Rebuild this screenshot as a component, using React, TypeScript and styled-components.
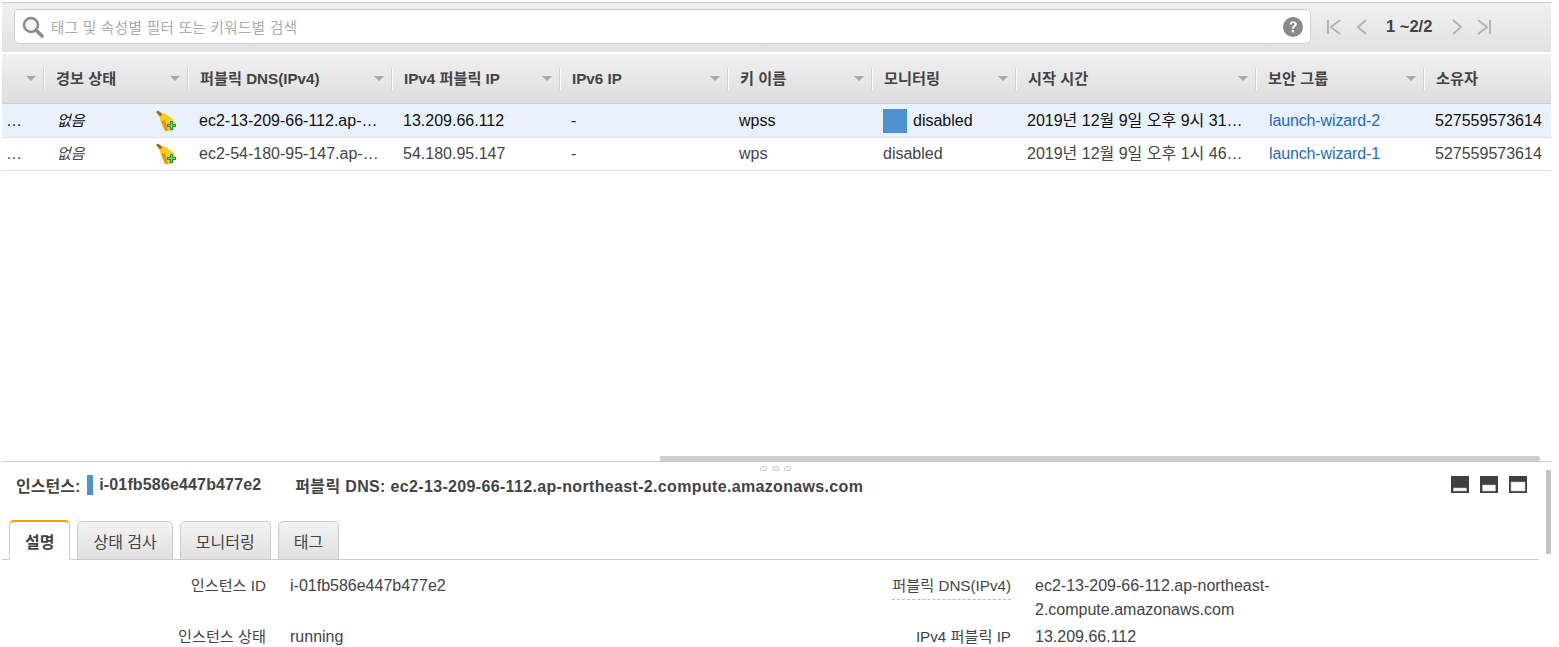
import React from "react";
import styled, { createGlobalStyle } from "styled-components";

const GlobalStyle = createGlobalStyle`
  html, body { margin: 0; padding: 0; background: #fff; }
  body {
    font-family: "Liberation Sans", "Noto Sans CJK KR", Arial, sans-serif;
    font-size: 16px;
    color: #444;
  }
`;

const COLUMNS = "41px 144px 204px 168px 168px 144px 144px 240px 168px 128px";

const Page = styled.div`
  width: 1549px;
  height: 647px;
  margin-left: 2px;
  overflow: hidden;
  display: flex;
  flex-direction: column;
`;

const Toolbar = styled.div`
  flex: none;
  height: 49px;
  margin-top: 2px;
  border-top: 1px solid #c8c8c8;
  border-bottom: 2px solid #fff;
  background: linear-gradient(#f0f0f0, #e2e2e2);
  display: flex;
  align-items: center;
  padding-left: 12px;
`;

const SearchBox = styled.div`
  width: 1297px;
  height: 35px;
  box-sizing: border-box;
  background: #fff;
  border: 1px solid #cfcfcf;
  border-radius: 5px;
  display: flex;
  align-items: center;
  padding: 0 7px 0 7px;
  gap: 7px;
  margin-top: -2px;
`;

const Placeholder = styled.span`
  flex: 1;
  color: #aaa;
  font-size: 14.5px;
  letter-spacing: 0.4px;
`;

const Pager = styled.div`
  display: flex;
  align-items: center;
  margin-left: 15px;
  margin-top: -2px;
`;

const PagerText = styled.span`
  font-weight: 700;
  font-size: 16.5px;
  color: #444;
  margin: 0 18px 0 15px;
`;

const PagerButton = styled.svg<{ $gap?: number }>`
  width: 16px;
  height: 18px;
  margin-right: ${(p) => p.$gap ?? 0}px;
  fill: none;
  stroke: #b4b4b4;
  stroke-width: 2;
`;

const TableArea = styled.div`
  position: relative;
  height: 407px;
  flex: none;
`;

const HeaderRow = styled.div`
  display: grid;
  grid-template-columns: ${COLUMNS};
  height: 49px;
  background: linear-gradient(#f0f0f0, #dedede);
  border-bottom: 1px solid #ccc;
`;

const HeaderCell = styled.div`
  display: flex;
  align-items: center;
  justify-content: space-between;
  padding-right: 7px;
`;

const HeaderLabel = styled.span`
  height: 22px;
  line-height: 22px;
  flex: 1;
  padding-left: 12px;
  border-left: 1px solid #d2d2d2;
  box-shadow: inset 1px 0 0 #fafafa;
  font-weight: 700;
  font-size: 15.2px;
  color: #444;
  white-space: nowrap;
`;

const FirstLabel = styled.span`
  flex: 1;
`;

const Caret = styled.i`
  width: 0;
  height: 0;
  border-left: 5px solid transparent;
  border-right: 5px solid transparent;
  border-top: 5px solid #a8a8a8;
`;

const Row = styled.div<{ $selected?: boolean }>`
  display: grid;
  grid-template-columns: ${COLUMNS};
  height: 32.6px;
  align-items: center;
  background: ${(p) => (p.$selected ? "#e9f1fc" : "#fff")};
  color: ${(p) => (p.$selected ? "#111" : "#444")};
  border-bottom: 1px solid #e0e0e0;
  white-space: nowrap;
`;

const Cell = styled.div<{ $pad?: number }>`
  padding-left: ${(p) => p.$pad ?? 12}px;
  padding-right: 12px;
  padding-top: 1px;
  overflow: hidden;
  display: flex;
  align-items: center;
  min-width: 0;
  line-height: 20px;
`;

const AlarmCell = styled(Cell)`
  justify-content: space-between;
  padding-right: 10px;
  overflow: visible;
`;

const Truncated = styled.span`
  overflow: hidden;
  text-overflow: ellipsis;
`;

const Italic = styled.em`
  font-style: italic;
  font-size: 15px;
`;

const Link = styled.a`
  color: #1e6bbf;
  text-decoration: none;
  letter-spacing: -0.13px;
`;

const MonitorSwatch = styled.span`
  width: 24px;
  height: 24px;
  background: #5091d0;
  margin-right: 6px;
  flex: none;
`;

const HScroll = styled.div`
  position: absolute;
  left: 658px;
  bottom: 0;
  width: 880px;
  height: 5px;
  background: #cfcfcf;
  border-radius: 0 2px 2px 0;
`;

const Details = styled.div`
  position: relative;
  border-top: 1px solid #ccc;
  flex: 1;
`;

const DragHandle = styled.div`
  position: absolute;
  top: 4px;
  left: 758px;
  display: flex;
  gap: 5px;
`;

const DragDot = styled.i`
  width: 5px;
  height: 3px;
  background: #f2f2f2;
  border: 1px solid #d0d0d0;
  border-radius: 2px 2px 0 0;
`;

const VScroll = styled.div`
  position: absolute;
  top: 8px;
  right: 0;
  width: 5px;
  height: 84px;
  background: #c4c4c4;
`;

const DetailsTitle = styled.div`
  height: 45px;
  display: flex;
  align-items: center;
  padding: 0 24px 0 14px;
  font-weight: 700;
  font-size: 16px;
  color: #444;
  white-space: nowrap;
`;

const IdMark = styled.span`
  width: 6px;
  height: 20px;
  background: #5091d0;
  margin: 0 6px 0 7px;
`;

const TitleDns = styled.span`
  margin-left: 34px;
  flex: 1;
  letter-spacing: 0.34px;
`;

const InstanceId = styled.span`
  letter-spacing: 0.15px;
`;

const WindowIcons = styled.div`
  display: flex;
  gap: 11px;
`;

const TabStrip = styled.div`
  height: 53px;
  margin-right: 12px;
  padding: 12px 0 0 7px;
  box-sizing: border-box;
  display: flex;
  align-items: flex-end;
  gap: 7px;
  border-bottom: 1px solid #ccc;
`;

const Tab = styled.div<{ $active?: boolean }>`
  height: ${(p) => (p.$active ? 40 : 39)}px;
  margin-bottom: -1px;
  padding: 0 15px;
  display: flex;
  align-items: center;
  box-sizing: border-box;
  border: 1px solid #ccc;
  border-top: ${(p) => (p.$active ? "2px solid #f90" : "1px solid #ccc")};
  border-bottom: ${(p) => (p.$active ? "1px solid #fff" : "1px solid #ccc")};
  border-radius: 5px 5px 0 0;
  background: ${(p) => (p.$active ? "#fff" : "linear-gradient(#f3f3f3, #e0e0e0)")};
  font-weight: ${(p) => (p.$active ? 700 : 400)};
  font-size: 16px;
  color: #444;
`;

const Fields = styled.div`
  display: grid;
  grid-template-columns: 264px 400px 297px 240px;
  column-gap: 24px;
  grid-auto-rows: minmax(51px, auto);
  padding-top: 14px;
  line-height: 24px;
`;

const FieldLabel = styled.div`
  text-align: right;
  font-size: 15.2px;
  color: #444;
`;

const Dashed = styled.span`
  display: inline-block;
  border-bottom: 1px dashed #bbb;
  padding-bottom: 1px;
`;

const FieldValue = styled.div`
  font-size: 16px;
  color: #444;
`;

const BroomIcon = () => (
  <svg width="22" height="22" viewBox="0 0 22 22">
    <path d="M1 2 L3 0.5 L9 5 L6 8 Z" fill="#a8691c" />
    <path d="M4.5 7 L9 3 L18 9 L20 14 L17 21 L10 21 L6 13 Z" fill="#f6cf1e" />
    <path d="M6.5 11 L10 21 L13 21 L10 10 Z" fill="#d89c14" />
    <path d="M15 11 h3 v3 h3 v3 h-3 v3 h-3 v-3 h-3 v-3 h3 Z" fill="#1c8f2a" />
    <path d="M16 12 h1 v3 h3 v1 h-3 v3 h-1 v-3 h-3 v-1 h3 Z" fill="#7fdc7a" />
  </svg>
);

const SearchIcon = () => (
  <svg width="22" height="22" viewBox="0 0 22 22" fill="none">
    <circle cx="9" cy="9" r="7" stroke="#8c8c8c" strokeWidth="2.6" fill="#f4f4f4" />
    <path d="M14.5 14.5 L20 20" stroke="#8c8c8c" strokeWidth="3.6" strokeLinecap="round" />
  </svg>
);

const HelpIcon = () => (
  <svg width="20" height="20" viewBox="0 0 20 20">
    <circle cx="10" cy="10" r="10" fill="#8a8a8a" />
    <path d="M6.6 7.6 C6.8 5.2 8.4 4.2 10.2 4.2 C12.4 4.2 13.7 5.6 13.7 7.2 C13.7 9.6 11 9.6 11 11.8 L8.9 11.8 C8.9 8.8 11.4 8.8 11.4 7.3 C11.4 6.6 10.9 6.1 10.1 6.1 C9.3 6.1 8.9 6.7 8.8 7.6 Z" fill="#fff" />
    <rect x="8.8" y="13" width="2.3" height="2.4" fill="#fff" />
  </svg>
);

const WindowIcon = ({ inner }: { inner: number }) => (
  <svg width="18" height="17" viewBox="0 0 18 17">
    <rect width="18" height="17" fill="#3f3f3f" />
    <rect x={inner > 6 ? 2 : 2.5} y={15 - inner} width={inner > 6 ? 14 : 13} height={inner} fill="#fff" stroke="#bbb" strokeWidth="0.6" />
  </svg>
);

const columns = ["", "경보 상태", "퍼블릭 DNS(IPv4)", "IPv4 퍼블릭 IP", "IPv6 IP", "키 이름", "모니터링", "시작 시간", "보안 그룹", "소유자"];

const rows = [
  { selected: true, dns: "ec2-13-209-66-112.ap-northeast-2.compute.amazonaws.com", ip: "13.209.66.112", key: "wpss", time: "2019년 12월 9일 오후 9시 31분 25초 UTC+9", group: "launch-wizard-2" },
  { selected: false, dns: "ec2-54-180-95-147.ap-northeast-2.compute.amazonaws.com", ip: "54.180.95.147", key: "wps", time: "2019년 12월 9일 오후 1시 46분 10초 UTC+9", group: "launch-wizard-1" },
];

const App = () => {
  return (
    <Page>
      <GlobalStyle />
      <Toolbar>
        <SearchBox>
          <SearchIcon />
          <Placeholder>태그 및 속성별 필터 또는 키워드별 검색</Placeholder>
          <HelpIcon />
        </SearchBox>
        <Pager>
          <PagerButton viewBox="0 0 16 18" $gap={13}>
            <path d="M2 2 V16 M14 2 L5 9 L14 16" />
          </PagerButton>
          <PagerButton viewBox="0 0 16 18">
            <path d="M11 2 L3 9 L11 16" />
          </PagerButton>
          <PagerText>1 ~2/2</PagerText>
          <PagerButton viewBox="0 0 16 18" $gap={10}>
            <path d="M3 2 L11 9 L3 16" />
          </PagerButton>
          <PagerButton viewBox="0 0 16 18">
            <path d="M14 2 V16 M2 2 L11 9 L2 16" />
          </PagerButton>
        </Pager>
      </Toolbar>
      <TableArea>
        <HeaderRow>
          {columns.map((label, i) => (
            <HeaderCell key={i}>
              {i === 0 ? <FirstLabel /> : <HeaderLabel>{label}</HeaderLabel>}
              {i < 9 && <Caret />}
            </HeaderCell>
          ))}
        </HeaderRow>
        {rows.map((r) => (
          <Row key={r.ip} $selected={r.selected}>
            <Cell $pad={4}>…</Cell>
            <AlarmCell $pad={14}>
              <Italic>없음</Italic>
              <BroomIcon />
            </AlarmCell>
            <Cell>
              <Truncated>{r.dns}</Truncated>
            </Cell>
            <Cell>{r.ip}</Cell>
            <Cell>-</Cell>
            <Cell>{r.key}</Cell>
            <Cell>
              {r.selected && <MonitorSwatch />}
              disabled
            </Cell>
            <Cell>
              <Truncated>{r.time}</Truncated>
            </Cell>
            <Cell $pad={14}>
              <Link>{r.group}</Link>
            </Cell>
            <Cell>527559573614</Cell>
          </Row>
        ))}
        <HScroll />
      </TableArea>
      <Details>
        <DragHandle>
          <DragDot />
          <DragDot />
          <DragDot />
        </DragHandle>
        <VScroll />
        <DetailsTitle>
          인스턴스:
          <IdMark />
          <InstanceId>i-01fb586e447b477e2</InstanceId>
          <TitleDns>퍼블릭 DNS: ec2-13-209-66-112.ap-northeast-2.compute.amazonaws.com</TitleDns>
          <WindowIcons>
            <WindowIcon inner={3} />
            <WindowIcon inner={6} />
            <WindowIcon inner={9} />
          </WindowIcons>
        </DetailsTitle>
        <TabStrip>
          <Tab $active>설명</Tab>
          <Tab>상태 검사</Tab>
          <Tab>모니터링</Tab>
          <Tab>태그</Tab>
        </TabStrip>
        <Fields>
          <FieldLabel>인스턴스 ID</FieldLabel>
          <FieldValue>i-01fb586e447b477e2</FieldValue>
          <FieldLabel>
            <Dashed>퍼블릭 DNS(IPv4)</Dashed>
          </FieldLabel>
          <FieldValue>ec2-13-209-66-112.ap-northeast-2.compute.amazonaws.com</FieldValue>
          <FieldLabel>인스턴스 상태</FieldLabel>
          <FieldValue>running</FieldValue>
          <FieldLabel>IPv4 퍼블릭 IP</FieldLabel>
          <FieldValue>13.209.66.112</FieldValue>
        </Fields>
      </Details>
    </Page>
  );
};

export default App;
